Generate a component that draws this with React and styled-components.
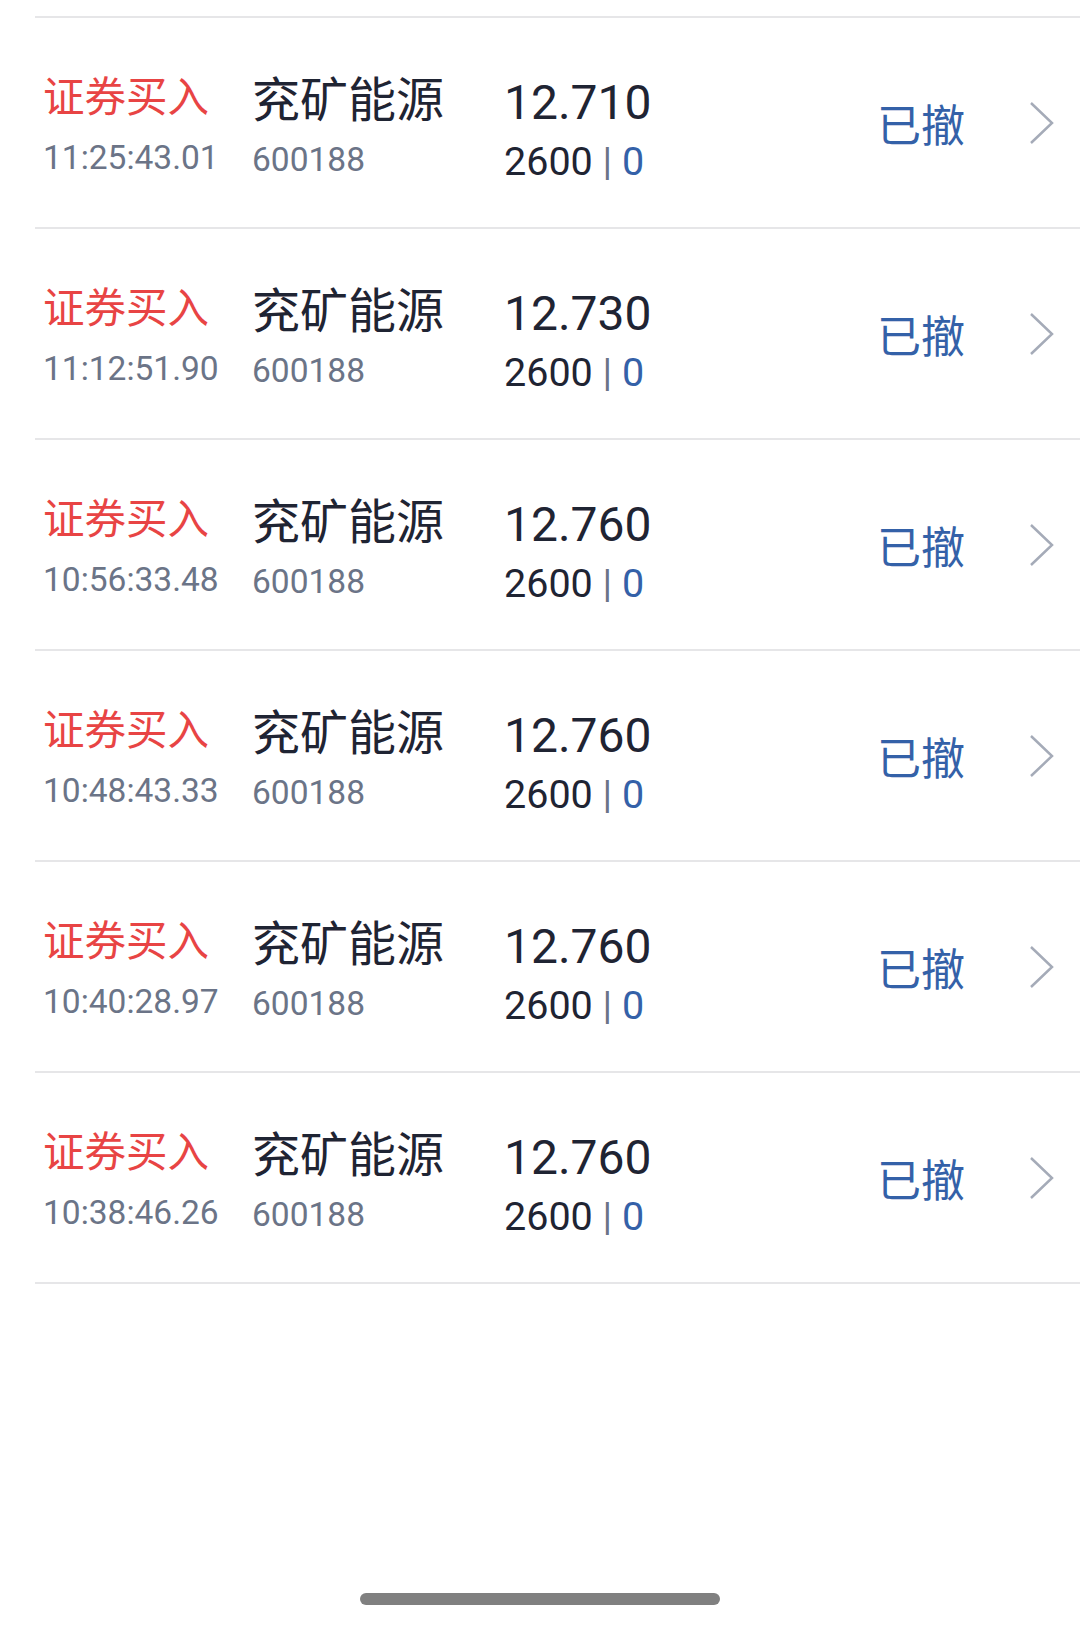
import React from "react";
import styled, { createGlobalStyle } from "styled-components";

const orders = [
  { time: "11:25:43.01", price: "12.710" },
  { time: "11:12:51.90", price: "12.730" },
  { time: "10:56:33.48", price: "12.760" },
  { time: "10:48:43.33", price: "12.760" },
  { time: "10:40:28.97", price: "12.760" },
  { time: "10:38:46.26", price: "12.760" },
];

export default function App() {
  return (
    <>
      <Global />
      <Page>
        <List>
          {orders.map((o, i) => (
            <Row key={i}>
              <Cell $top={53}>
                <Side>证券买入</Side>
                <Time>{o.time}</Time>
              </Cell>
              <Cell $top={56}>
                <Name>兖矿能源</Name>
                <Code>600188</Code>
              </Cell>
              <Cell $top={57}>
                <Price>{o.price}</Price>
                <Qty>
                  2600 <Sep>|</Sep> <Done>0</Done>
                </Qty>
              </Cell>
              <Status>已撤</Status>
              <Chevron viewBox="0 0 25 44">
                <path d="M2 2 L23 22 L2 42" />
              </Chevron>
            </Row>
          ))}
        </List>
        <HomeBar />
      </Page>
    </>
  );
}

const Global = createGlobalStyle`
  body {
    margin: 0;
    background: #fff;
    font-family: Roboto, "Noto Sans CJK SC", sans-serif;
  }
`;

const Page = styled.div`
  height: 1625px;
  display: flex;
  flex-direction: column;
  padding-top: 16px;
  box-sizing: border-box;
`;

const List = styled.div`
  flex: 1;
  margin-left: 35px;
`;

const Row = styled.div`
  height: 211px;
  box-sizing: border-box;
  border-top: 2px solid #e6e6e8;
  display: grid;
  grid-template-columns: 209px 252px 1fr auto 25px;
  align-items: start;
  padding: 0 26px 0 8px;

  &:last-child {
    border-bottom: 2px solid #e6e6e8;
    height: 213px;
  }
`;

const Cell = styled.div`
  display: flex;
  flex-direction: column;
  padding-top: ${(p) => p.$top}px;
`;

const Side = styled.div`
  font-size: 41.5px;
  line-height: 54px;
  color: #e84444;
`;

const Time = styled.div`
  font-size: 33.5px;
  line-height: 44px;
  color: #6b7487;
  margin-top: 11px;
`;

const Name = styled.div`
  font-size: 48px;
  line-height: 54px;
  color: #1f2433;
`;

const Code = styled.div`
  font-size: 33.5px;
  line-height: 44px;
  color: #6b7487;
  margin-top: 9.5px;
`;

const Price = styled.div`
  font-size: 48px;
  line-height: 56px;
  color: #1f2433;
`;

const Qty = styled.div`
  font-size: 39.5px;
  line-height: 46px;
  color: #1f2433;
  margin-top: 8px;
`;

const Sep = styled.span`
  color: #6b7487;
`;

const Done = styled.span`
  color: #3461a8;
`;

const Status = styled.div`
  align-self: center;
  font-size: 44px;
  color: #3461a8;
  margin-right: 64px;
`;

const Chevron = styled.svg`
  align-self: center;
  width: 25px;
  height: 44px;
  fill: none;
  stroke: #a5abb8;
  stroke-width: 2.5;
`;

const HomeBar = styled.div`
  align-self: center;
  width: 360px;
  height: 12px;
  border-radius: 6px;
  background: #808080;
  margin-bottom: 20px;
`;
